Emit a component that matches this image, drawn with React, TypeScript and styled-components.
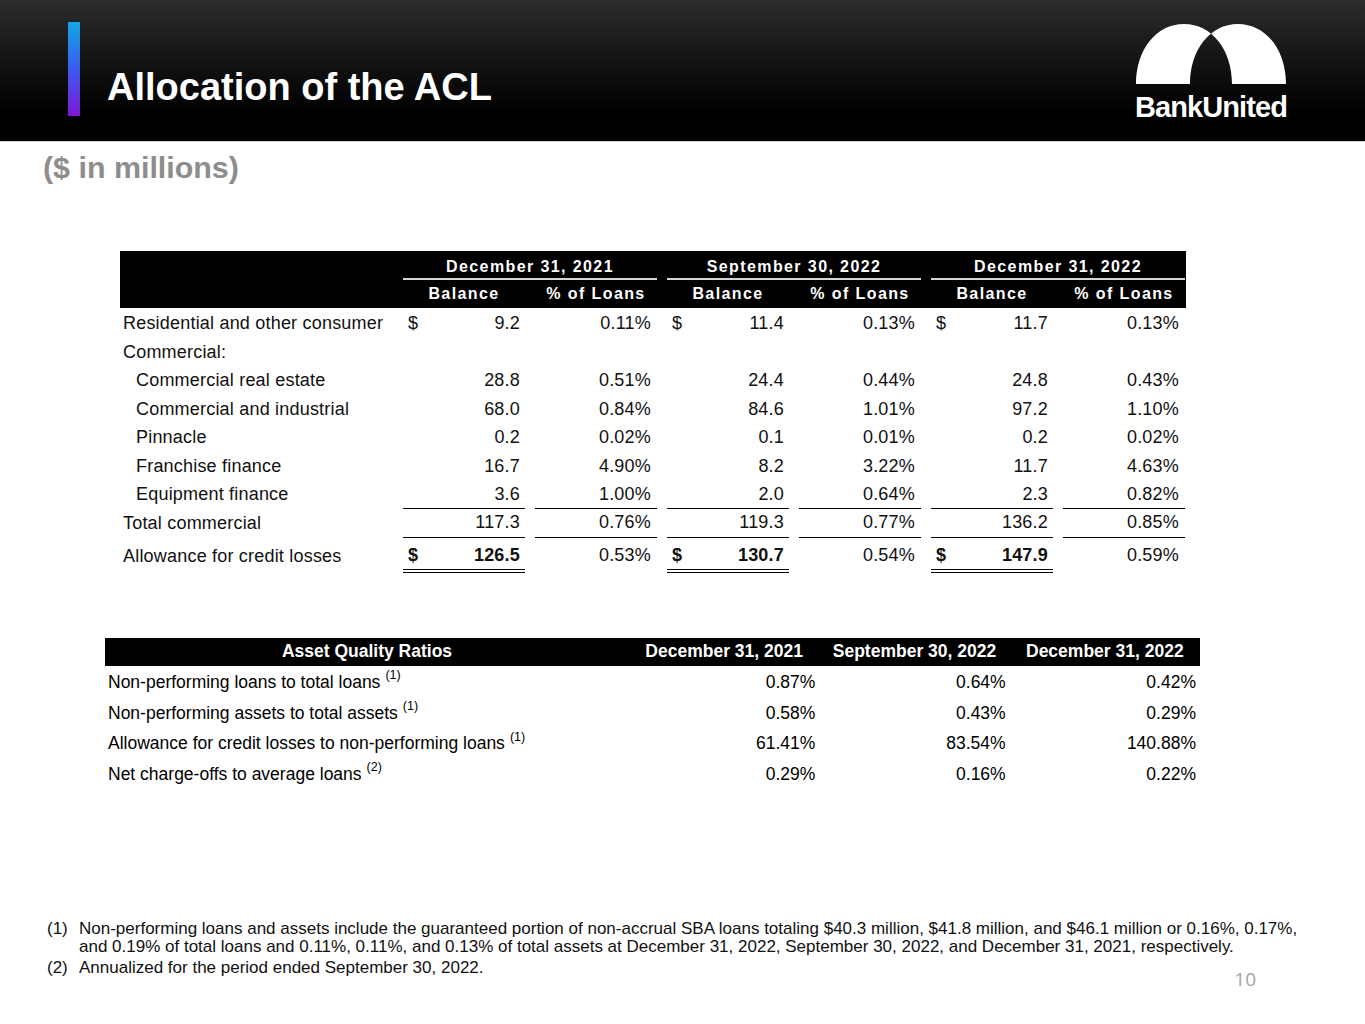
import React from "react"
import styled, { createGlobalStyle } from "styled-components"

const GlobalStyle = createGlobalStyle`
  body {
    margin: 0;
    background: #fff;
    font-family: "Liberation Sans", Arial, sans-serif;
    color: #000;
  }
`

const Page = styled.div`
  width: 1365px;
  min-height: 1024px;
  background: #fff;
`

const Header = styled.header`
  box-sizing: border-box;
  height: 142px;
  border-bottom: 1px solid #cfcfcf;
  background: linear-gradient(180deg, #2c2c2e 0%, #151516 40%, #000 80%);
  display: flex;
  align-items: flex-start;
  padding: 0 79px 0 68px;
`

const AccentBar = styled.div`
  width: 12px;
  height: 94px;
  margin-top: 22px;
  background: linear-gradient(180deg, #12a6e4 0%, #3a5cf0 50%, #7e16d4 100%);
`

const Title = styled.h1`
  margin: 68px 0 0 27px;
  font-size: 38px;
  line-height: 38px;
  font-weight: 700;
  color: #fff;
`

const Logo = styled.div`
  margin-left: auto;
  margin-top: 22px;
  width: 150px;
  display: flex;
  flex-direction: column;
  align-items: center;
`

const LogoMark = styled.svg`
  display: block;
  width: 150px;
  height: 62px;
`

const LogoText = styled.div`
  margin-top: 9px;
  font-size: 29px;
  line-height: 29px;
  font-weight: 700;
  letter-spacing: -0.9px;
  color: #fff;
`

const Subtitle = styled.h2`
  margin: 8px 0 0 43px;
  font-size: 30.4px;
  line-height: 34px;
  font-weight: 700;
  color: #8d8d8d;
`

// ---- allocation table ----

const AclTable = styled.div`
  margin: 67px 0 0 120px;
  width: 1066px;
`

const AclRow = styled.div<{ $tall?: boolean; $first?: boolean }>`
  display: grid;
  grid-template-columns: 273px repeat(6, 122px);
  column-gap: 10px;
  height: ${({ $tall }) => ($tall ? "31.5px" : "28.5px")};
  margin-top: ${({ $tall, $first }) => ($tall ? "3.5px" : $first ? "1.5px" : "0")};
  font-size: 18px;
  letter-spacing: 0.2px;
  color: #111;
`

const AclHead = styled.div`
  background: #000;
  color: #fff;
  font-weight: 700;
  font-size: 16px;
  letter-spacing: 1.4px;
`

const HeadRow = styled.div<{ $top?: boolean }>`
  display: grid;
  grid-template-columns: 273px repeat(6, 122px);
  column-gap: 10px;
  height: ${({ $top }) => ($top ? "29px" : "28px")};
`

const GroupTitle = styled.div`
  grid-column: span 2;
  box-sizing: border-box;
  padding-top: 4px;
  border-bottom: 2px solid #d6d6d6;
  display: flex;
  align-items: center;
  justify-content: center;
`

const ColTitle = styled.div`
  display: flex;
  align-items: center;
  justify-content: center;
`

const Label = styled.div<{ $indent?: boolean }>`
  display: flex;
  align-items: center;
  padding-left: ${({ $indent }) => ($indent ? "16px" : "3px")};
  white-space: nowrap;
`

type Rule = "none" | "single" | "double"

const AmountCell = styled.div<{ $rule: Rule; $bold?: boolean }>`
  box-sizing: border-box;
  display: flex;
  align-items: center;
  justify-content: space-between;
  padding: ${({ $rule }) => ($rule === "double" ? "2px 5px 0" : "0 5px")};
  font-weight: ${({ $bold }) => ($bold ? 700 : 400)};
  border-bottom: ${({ $rule }) =>
    $rule === "double" ? "4px double #000" : $rule === "single" ? "1.5px solid #000" : "none"};
`

const PctCell = styled.div<{ $rule: Rule; $pad?: boolean }>`
  box-sizing: border-box;
  display: flex;
  align-items: center;
  justify-content: flex-end;
  padding: ${({ $pad }) => ($pad ? "0 6px 2px 0" : "0 6px 0 0")};
  border-bottom: ${({ $rule }) => ($rule === "single" ? "1.5px solid #000" : "none")};
`

type AclLine = {
  label: string
  indent?: boolean
  dollar?: boolean
  rule?: Rule
  total?: boolean
  values?: string[]
}

const aclLines: AclLine[] = [
  { label: "Residential and other consumer", dollar: true, values: ["9.2", "0.11%", "11.4", "0.13%", "11.7", "0.13%"] },
  { label: "Commercial:" },
  { label: "Commercial real estate", indent: true, values: ["28.8", "0.51%", "24.4", "0.44%", "24.8", "0.43%"] },
  { label: "Commercial and industrial", indent: true, values: ["68.0", "0.84%", "84.6", "1.01%", "97.2", "1.10%"] },
  { label: "Pinnacle", indent: true, values: ["0.2", "0.02%", "0.1", "0.01%", "0.2", "0.02%"] },
  { label: "Franchise finance", indent: true, values: ["16.7", "4.90%", "8.2", "3.22%", "11.7", "4.63%"] },
  { label: "Equipment finance", indent: true, rule: "single", values: ["3.6", "1.00%", "2.0", "0.64%", "2.3", "0.82%"] },
  { label: "Total commercial", rule: "single", values: ["117.3", "0.76%", "119.3", "0.77%", "136.2", "0.85%"] },
  { label: "Allowance for credit losses", dollar: true, total: true, values: ["126.5", "0.53%", "130.7", "0.54%", "147.9", "0.59%"] },
]

const periods = ["December 31, 2021", "September 30, 2022", "December 31, 2022"]

// ---- ratios table ----

const RatioTable = styled.div`
  margin: 65px 0 0 105px;
  width: 1095px;
`

const RatioRow = styled.div<{ $head?: boolean }>`
  display: grid;
  grid-template-columns: 524px repeat(3, 190.33px);
  height: ${({ $head }) => ($head ? "28px" : "30.7px")};
  background: ${({ $head }) => ($head ? "#000" : "transparent")};
  color: ${({ $head }) => ($head ? "#fff" : "#000")};
  font-weight: ${({ $head }) => ($head ? 700 : 400)};
  font-size: 17.5px;
  &:nth-child(2) {
    margin-top: 1.5px;
  }
`

const RatioHeadCell = styled.div`
  display: flex;
  align-items: center;
  justify-content: center;
  white-space: nowrap;
`

const RatioLabel = styled.div`
  display: flex;
  align-items: center;
  padding-left: 3px;
  white-space: nowrap;
`

const RatioValue = styled.div`
  display: flex;
  align-items: center;
  justify-content: flex-end;
  padding-right: 4px;
`

const Note = styled.span`
  font-size: 12.5px;
  margin-left: 5px;
  position: relative;
  top: -7px;
`

const ratios = [
  { label: "Non-performing loans to total loans", note: 1, values: ["0.87%", "0.64%", "0.42%"] },
  { label: "Non-performing assets to total assets", note: 1, values: ["0.58%", "0.43%", "0.29%"] },
  { label: "Allowance for credit losses to non-performing loans", note: 1, values: ["61.41%", "83.54%", "140.88%"] },
  { label: "Net charge-offs to average loans", note: 2, values: ["0.29%", "0.16%", "0.22%"] },
]

// ---- footnotes ----

const Footnotes = styled.div`
  margin-top: 130px;
  padding: 0 109px 0 47px;
  font-size: 17px;
  line-height: 18px;
  color: #111;
`

const FootRow = styled.div`
  display: flex;
  align-items: flex-start;
  margin-bottom: 3px;
`

const FootNum = styled.div`
  width: 32px;
  flex-shrink: 0;
`

const FootText = styled.div`
  white-space: nowrap;
`

const PageNumber = styled.div`
  margin-left: auto;
  font-family: "Open Sans", "Liberation Sans", sans-serif;
  font-size: 19px;
  line-height: 18px;
  padding-top: 2px;
  color: #a3a3a3;
  transform: translateY(9px);
`

export default function App() {
  return (
    <Page>
      <GlobalStyle />
      <Header>
        <AccentBar />
        <Title>Allocation of the ACL</Title>
        <Logo>
          <LogoMark viewBox="0 0 150 62">
            <path
              fill="#fff"
              fillRule="evenodd"
              d="M0 62 C0 28 20 2 48 2 C76 2 96 28 96 62 Z M54 62 C54 28 74 2 102 2 C130 2 150 28 150 62 Z"
            />
          </LogoMark>
          <LogoText>BankUnited</LogoText>
        </Logo>
      </Header>

      <Subtitle>($ in millions)</Subtitle>

      <AclTable>
        <AclHead>
          <HeadRow $top>
            <div />
            {periods.map((p) => (
              <GroupTitle key={p}>{p}</GroupTitle>
            ))}
          </HeadRow>
          <HeadRow>
            <div />
            {periods.map((p) => (
              <React.Fragment key={p}>
                <ColTitle>Balance</ColTitle>
                <ColTitle>% of Loans</ColTitle>
              </React.Fragment>
            ))}
          </HeadRow>
        </AclHead>

        {aclLines.map((line, i) => (
          <AclRow key={line.label} $first={i === 0} $tall={line.total}>
            <Label $indent={line.indent}>{line.label}</Label>
            {line.values &&
              line.values.map((v, j) =>
                j % 2 === 0 ? (
                  <AmountCell
                    key={j}
                    $rule={line.total ? "double" : line.rule ?? "none"}
                    $bold={line.total}
                  >
                    <span>{line.dollar ? "$" : ""}</span>
                    <span>{v}</span>
                  </AmountCell>
                ) : (
                  <PctCell key={j} $rule={line.rule ?? "none"} $pad={line.total}>
                    {v}
                  </PctCell>
                )
              )}
          </AclRow>
        ))}
      </AclTable>

      <RatioTable>
        <RatioRow $head>
          <RatioHeadCell>Asset Quality Ratios</RatioHeadCell>
          {periods.map((p) => (
            <RatioHeadCell key={p}>{p}</RatioHeadCell>
          ))}
        </RatioRow>
        {ratios.map((r) => (
          <RatioRow key={r.label}>
            <RatioLabel>
              {r.label}
              <Note>({r.note})</Note>
            </RatioLabel>
            {r.values.map((v, j) => (
              <RatioValue key={j}>{v}</RatioValue>
            ))}
          </RatioRow>
        ))}
      </RatioTable>

      <Footnotes>
        <FootRow>
          <FootNum>(1)</FootNum>
          <FootText>
            Non-performing loans and assets include the guaranteed portion of non-accrual SBA loans totaling $40.3
            million, $41.8 million, and $46.1 million or 0.16%, 0.17%,
            <br />
            and 0.19% of total loans and 0.11%, 0.11%, and 0.13% of total assets at December 31, 2022, September 30,
            2022, and December 31, 2021, respectively.
          </FootText>
        </FootRow>
        <FootRow>
          <FootNum>(2)</FootNum>
          <FootText>Annualized for the period ended September 30, 2022.</FootText>
          <PageNumber>10</PageNumber>
        </FootRow>
      </Footnotes>
    </Page>
  )
}
